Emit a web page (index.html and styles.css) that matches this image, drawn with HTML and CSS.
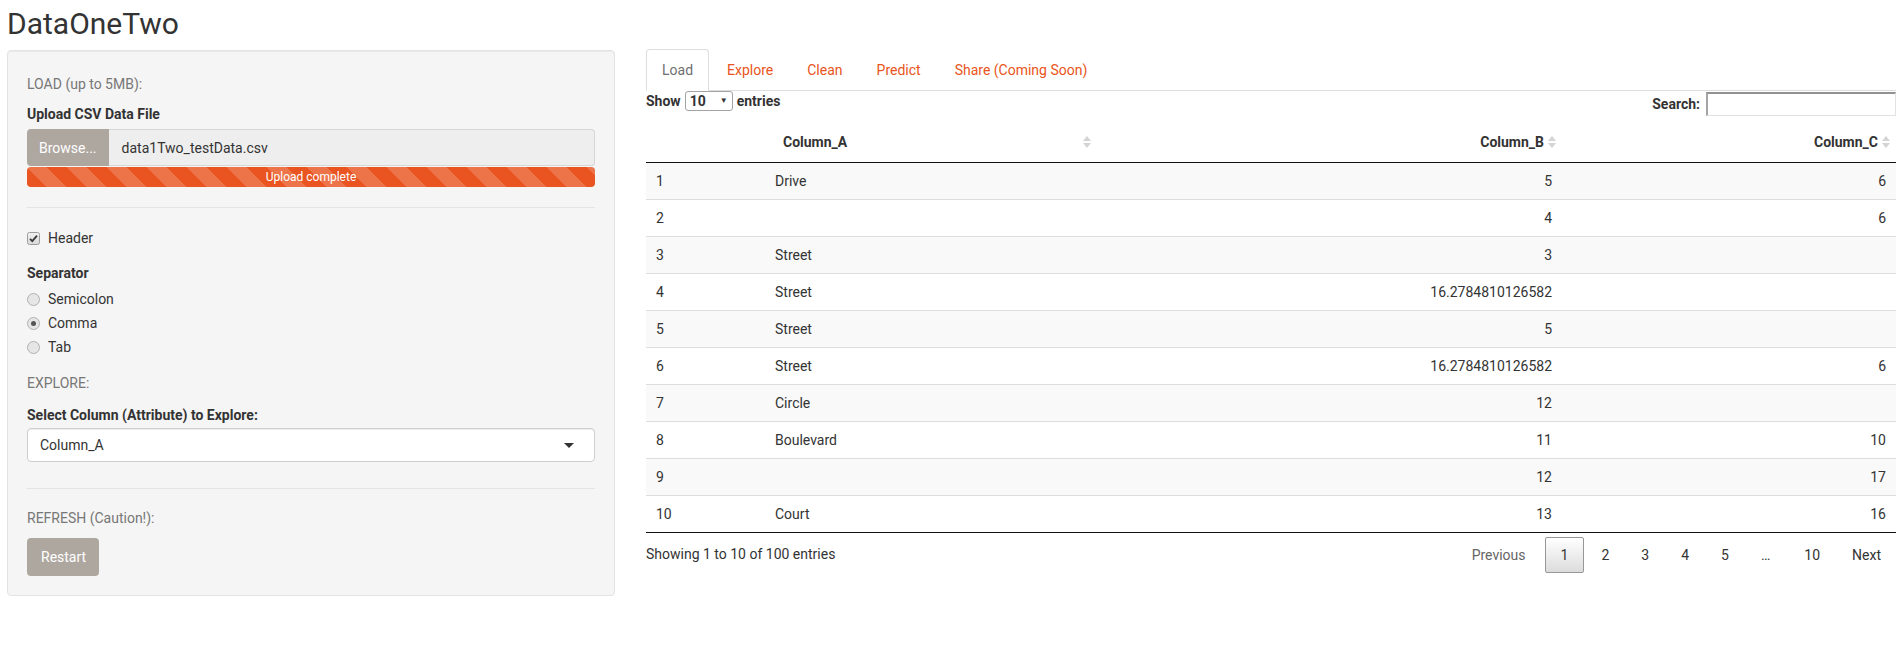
FILE: index.html
```html
<!DOCTYPE html>
<html lang="en">
<head>
<meta charset="utf-8">
<title>DataOneTwo</title>
<link rel="stylesheet" href="styles.css">
</head>
<body>
<div class="page">
  <h2 class="title">DataOneTwo</h2>
  <div class="layout">
    <aside class="well">
      <div class="sec-label lbl-load">LOAD (up to 5MB):</div>
      <div class="field-label lbl-upload">Upload CSV Data File</div>
      <div class="input-group">
        <span class="btn-browse">Browse...</span>
        <span class="file-name">data1Two_testData.csv</span>
      </div>
      <div class="progress"><div class="progress-bar">Upload complete</div></div>
      <hr class="divider hr-1">
      <div class="check-row">
        <svg class="cb" width="13" height="13" viewBox="0 0 13 13">
          <defs><linearGradient id="cbg" x1="0" y1="0" x2="0" y2="1"><stop offset="0" stop-color="#f2f2f2"/><stop offset="1" stop-color="#d9d9d9"/></linearGradient></defs>
          <rect x="0.5" y="0.5" width="12" height="12" rx="2" fill="url(#cbg)" stroke="#9c9c9c"/>
          <path d="M3 6.8 L5.3 9.2 L10 3.6" fill="none" stroke="#3a3a3a" stroke-width="1.8"/>
        </svg>
        <span>Header</span>
      </div>
      <div class="field-label lbl-sep">Separator</div>
      <div class="radio-group">
        <div class="radio-row">
          <svg class="rb" width="13" height="13" viewBox="0 0 13 13"><circle cx="6.5" cy="6.5" r="6" fill="#e6e6e6" stroke="#b0b0b0"/></svg>
          <span>Semicolon</span>
        </div>
        <div class="radio-row">
          <svg class="rb" width="13" height="13" viewBox="0 0 13 13"><circle cx="6.5" cy="6.5" r="6" fill="#e6e6e6" stroke="#b0b0b0"/><circle cx="6.5" cy="6.5" r="2.5" fill="#555"/></svg>
          <span>Comma</span>
        </div>
        <div class="radio-row">
          <svg class="rb" width="13" height="13" viewBox="0 0 13 13"><circle cx="6.5" cy="6.5" r="6" fill="#e6e6e6" stroke="#b0b0b0"/></svg>
          <span>Tab</span>
        </div>
      </div>
      <div class="sec-label lbl-explore">EXPLORE:</div>
      <div class="field-label lbl-select">Select Column (Attribute) to Explore:</div>
      <div class="select-box">
        <span>Column_A</span>
        <span class="caret"></span>
      </div>
      <hr class="divider hr-2">
      <div class="sec-label lbl-refresh">REFRESH (Caution!):</div>
      <div class="btn-restart">Restart</div>
    </aside>

    <main class="main">
      <ul class="tabs">
        <li class="tab active">Load</li>
        <li class="tab">Explore</li>
        <li class="tab">Clean</li>
        <li class="tab">Predict</li>
        <li class="tab">Share (Coming Soon)</li>
      </ul>
      <div class="dt-top">
        <div class="dt-length">
          <span>Show</span>
          <span class="len-select"><span>10</span><span class="len-caret">&#9660;</span></span>
          <span>entries</span>
        </div>
        <div class="dt-search">
          <span>Search:</span>
          <span class="search-input"></span>
        </div>
      </div>
      <table class="dt">
        <colgroup>
          <col class="c-idx"><col class="c-a"><col class="c-b"><col class="c-c">
        </colgroup>
        <thead>
          <tr>
            <th></th>
            <th>Column_A<svg class="sort" width="8" height="12" viewBox="0 0 8 12"><path d="M0 5 L4 0 L8 5 Z" fill="#d4d4d4"/><path d="M0 7 L4 12 L8 7 Z" fill="#d4d4d4"/></svg></th>
            <th class="num">Column_B<svg class="sort" width="8" height="12" viewBox="0 0 8 12"><path d="M0 5 L4 0 L8 5 Z" fill="#d4d4d4"/><path d="M0 7 L4 12 L8 7 Z" fill="#d4d4d4"/></svg></th>
            <th class="num">Column_C<svg class="sort" width="8" height="12" viewBox="0 0 8 12"><path d="M0 5 L4 0 L8 5 Z" fill="#d4d4d4"/><path d="M0 7 L4 12 L8 7 Z" fill="#d4d4d4"/></svg></th>
          </tr>
        </thead>
        <tbody>
          <tr><td>1</td><td>Drive</td><td class="num">5</td><td class="num">6</td></tr>
          <tr><td>2</td><td></td><td class="num">4</td><td class="num">6</td></tr>
          <tr><td>3</td><td>Street</td><td class="num">3</td><td class="num"></td></tr>
          <tr><td>4</td><td>Street</td><td class="num">16.2784810126582</td><td class="num"></td></tr>
          <tr><td>5</td><td>Street</td><td class="num">5</td><td class="num"></td></tr>
          <tr><td>6</td><td>Street</td><td class="num">16.2784810126582</td><td class="num">6</td></tr>
          <tr><td>7</td><td>Circle</td><td class="num">12</td><td class="num"></td></tr>
          <tr><td>8</td><td>Boulevard</td><td class="num">11</td><td class="num">10</td></tr>
          <tr><td>9</td><td></td><td class="num">12</td><td class="num">17</td></tr>
          <tr><td>10</td><td>Court</td><td class="num">13</td><td class="num">16</td></tr>
        </tbody>
      </table>
      <div class="dt-bottom">
        <div class="dt-info">Showing 1 to 10 of 100 entries</div>
        <div class="dt-paging">
          <span class="pg disabled">Previous</span>
          <span class="pg current">1</span>
          <span class="pg">2</span>
          <span class="pg">3</span>
          <span class="pg">4</span>
          <span class="pg">5</span>
          <span class="pg-ellipsis">…</span>
          <span class="pg">10</span>
          <span class="pg">Next</span>
        </div>
      </div>
    </main>
  </div>
</div>
</body>
</html>
```

FILE: styles.css
```css
body {
  margin: 0;
  font-family: Roboto, "Liberation Sans", sans-serif;
  font-size: 14px;
  line-height: 20px;
  color: #333;
  background: #fff;
}

.page {
  padding: 0 7px;
}

.title {
  font-size: 30px;
  font-weight: 400;
  line-height: 33px;
  margin: 7px 0 10px;
  color: #333;
}

.layout {
  display: flex;
  align-items: flex-start;
  gap: 31px;
}

/* ---------- sidebar ---------- */
.well {
  width: 608px;
  box-sizing: border-box;
  background: #f5f5f5;
  border: 1px solid #e3e3e3;
  border-radius: 4px;
  padding: 19px;
  box-shadow: inset 0 1px 1px rgba(0, 0, 0, 0.05);
}

.sec-label {
  color: #777;
  height: 20px;
}

.field-label {
  font-weight: 700;
  height: 20px;
}

.lbl-load { margin-top: 4px; }
.lbl-upload { margin-top: 10px; }

.input-group {
  display: flex;
  height: 37px;
  margin-top: 5px;
}

.btn-browse {
  display: flex;
  align-items: center;
  padding: 0 12px;
  background: #aea79f;
  color: #fff;
  border-radius: 4px 0 0 4px;
}

.file-name {
  flex: 1;
  display: flex;
  align-items: center;
  padding: 0 13px;
  background: #eee;
  border: 1px solid #d6d6d6;
  border-left: 0;
  border-radius: 0 4px 4px 0;
}

.progress {
  margin-top: 1px;
  height: 20px;
  border-radius: 4px;
  overflow: hidden;
}

.progress-bar {
  height: 20px;
  background-color: #e95420;
  background-image: linear-gradient(45deg, rgba(255,255,255,0.18) 25%, transparent 25%, transparent 50%, rgba(255,255,255,0.18) 50%, rgba(255,255,255,0.18) 75%, transparent 75%, transparent);
  background-size: 40px 40px;
  color: #fff;
  font-size: 12px;
  line-height: 20px;
  text-align: center;
}

.divider {
  border: 0;
  border-top: 1px solid #e4e4e4;
  margin: 0;
}

.hr-1 { margin-top: 20px; }
.hr-2 { margin-top: 26px; }

.check-row {
  display: flex;
  align-items: center;
  height: 20px;
  margin-top: 20px;
}

.cb, .rb {
  margin-right: 8px;
  flex: none;
}

.lbl-sep { margin-top: 15px; }

.radio-group { margin-top: 4px; }

.radio-row {
  display: flex;
  align-items: center;
  height: 24px;
}

.lbl-explore { margin-top: 14px; }
.lbl-select { margin-top: 12px; }

.select-box {
  margin-top: 3px;
  height: 34px;
  box-sizing: border-box;
  display: flex;
  align-items: center;
  justify-content: space-between;
  padding: 0 20px 0 12px;
  background: #fff;
  border: 1px solid #cfcfcf;
  border-radius: 4px;
  box-shadow: inset 0 1px 1px rgba(0, 0, 0, 0.075);
}

.caret {
  width: 0;
  height: 0;
  border-style: solid;
  border-width: 5px 5px 0 5px;
  border-color: #333 transparent transparent transparent;
}

.lbl-refresh { margin-top: 19px; }

.btn-restart {
  display: inline-flex;
  align-items: center;
  margin-top: 10px;
  height: 38px;
  padding: 0 13px 0 14px;
  background: #aea79f;
  color: #fff;
  border-radius: 4px;
}

/* ---------- main ---------- */
.main {
  width: 1250px;
  margin-top: -1px;
}

.tabs {
  display: flex;
  list-style: none;
  margin: 0;
  padding: 0;
  border-bottom: 1px solid #ddd;
}

.tab {
  margin-right: 2px;
  margin-bottom: -1px;
  padding: 10px 15px;
  line-height: 20px;
  border: 1px solid transparent;
  border-radius: 4px 4px 0 0;
  color: #e95420;
}

.tab.active {
  color: #6f6f6f;
  background: #fff;
  border-color: #ddd #ddd transparent #ddd;
}

.dt-top {
  display: flex;
  justify-content: space-between;
  align-items: flex-start;
  height: 31px;
}

.dt-length {
  display: flex;
  align-items: center;
  height: 20px;
  font-weight: 700;
}

.len-select {
  width: 48px;
  height: 20px;
  box-sizing: border-box;
  margin: 0 4px;
  padding: 0 4px;
  display: flex;
  align-items: center;
  justify-content: space-between;
  background: #fff;
  border: 1px solid #a3a3a3;
  border-radius: 3px;
}

.len-caret {
  font-size: 8px;
  color: #333;
}

.dt-search {
  display: flex;
  align-items: center;
  height: 24px;
  margin-top: 1px;
  font-weight: 700;
}

.search-input {
  width: 190px;
  height: 24px;
  box-sizing: border-box;
  margin-left: 6px;
  background: #fff;
  border-style: solid;
  border-width: 2px 1px 1px 2px;
  border-color: #929292 #e2e2e2 #e2e2e2 #a5a5a5;
}

.dt {
  width: 1250px;
  table-layout: fixed;
  border-collapse: separate;
  border-spacing: 0;
  border-bottom: 1px solid #111;
}

.c-idx { width: 119px; }
.c-a { width: 332px; }
.c-b { width: 465px; }
.c-c { width: 334px; }

.dt th {
  position: relative;
  padding: 10px 18px;
  line-height: 20px;
  font-weight: 700;
  text-align: left;
  border-bottom: 1px solid #111;
}

.dt th.num { text-align: right; }

.sort {
  position: absolute;
  right: 6px;
  top: 14px;
}

.dt td {
  padding: 8px 10px;
  line-height: 20px;
  height: 20px;
  border-top: 1px solid #ddd;
}

.dt tbody tr:first-child td { border-top: 0; }
.dt tbody tr:nth-child(odd) { background: #f9f9f9; }
.dt td.num { text-align: right; }

.dt-bottom {
  display: flex;
  justify-content: space-between;
  align-items: flex-start;
}

.dt-info {
  padding-top: 10.5px;
}

.dt-paging {
  display: flex;
  align-items: center;
  padding-top: 3.5px;
}

.pg {
  padding: 7px 14px;
  margin-left: 2px;
  border: 1px solid transparent;
  border-radius: 2px;
  line-height: 20px;
  text-align: center;
  color: #333;
}

.pg.disabled { color: #666; padding-right: 16px; }

.pg.current {
  padding: 7px 15px;
  border-color: #979797;
  background: linear-gradient(to bottom, #fff 0%, #dcdcdc 100%);
}

.pg-ellipsis {
  padding: 0 17px;
}
```
